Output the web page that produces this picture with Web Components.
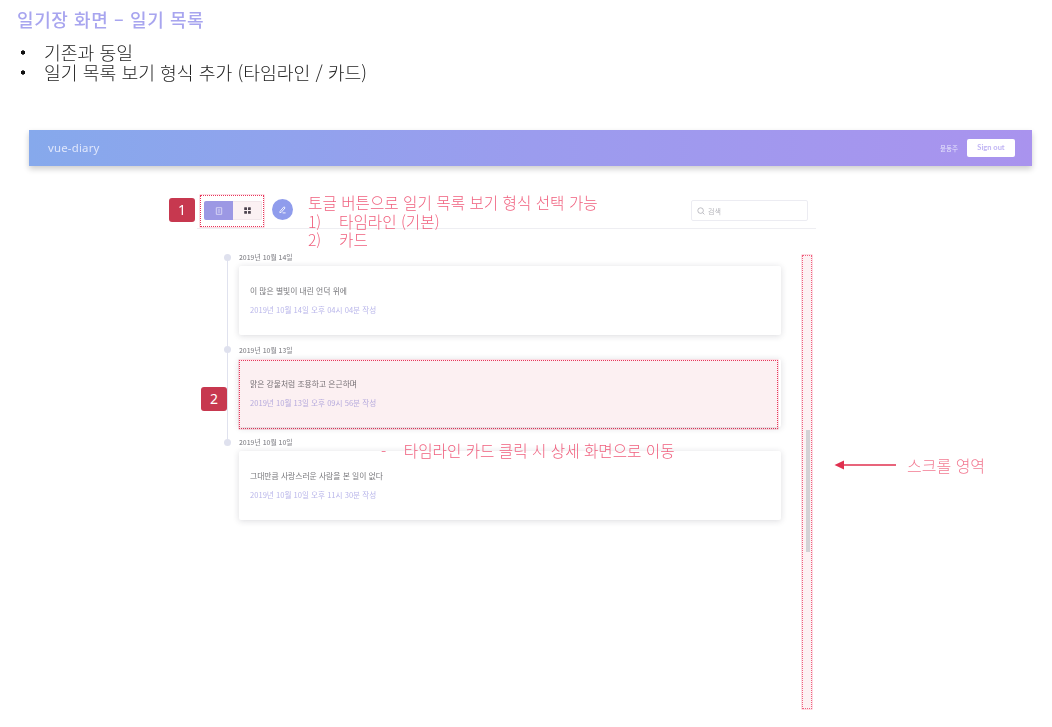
<!DOCTYPE html>
<html lang="ko">
<head>
<meta charset="utf-8">
<title>일기 목록</title>
<style>
html,body{margin:0;padding:0;background:#fff}
body{width:1052px;height:727px;overflow:hidden;font-family:"Noto Sans CJK KR","Noto Sans",sans-serif}
</style>
</head>
<body>
<slide-page>
  <slide-notes slot="notes" title-text="일기장 화면 – 일기 목록">
    <li>기존과 동일</li>
    <li>일기 목록 보기 형식 추가 (타임라인 / 카드)</li>
  </slide-notes>
  <diary-app slot="app">
    <timeline-entry date="2019년 10월 14일" text="이 많은 별빛이 내린 언덕 위에" meta="2019년 10월 14일 오후 04시 04분 작성"></timeline-entry>
    <timeline-entry date="2019년 10월 13일" text="맑은 강물처럼 조용하고 은근하며" meta="2019년 10월 13일 오후 09시 56분 작성"></timeline-entry>
    <timeline-entry last date="2019년 10월 10일" text="그대만큼 사랑스러운 사람을 본 일이 없다" meta="2019년 10월 10일 오후 11시 30분 작성"></timeline-entry>
  </diary-app>
  <slide-annotations slot="overlay"></slide-annotations>
</slide-page>

<script>
const FONT='"Noto Sans CJK KR","Noto Sans",sans-serif';
function define(name,html,init){
  customElements.define(name,class extends HTMLElement{
    constructor(){super();this.attachShadow({mode:'open'}).innerHTML=html}
    connectedCallback(){if(init)init(this)}
  });
}
define('slide-page',`<style>
:host{display:block;position:relative;width:1052px;height:727px;overflow:hidden}
.app{padding:0 20px 0 29px}
</style>
<slot name="notes"></slot><div class="app"><slot name="app"></slot></div><slot name="overlay"></slot>`);

define('slide-notes',`<style>
:host{display:block;height:130px;box-sizing:border-box;padding:7px 0 0 17px;font-family:${FONT}}
h1{margin:0 0 11px;font-size:18px;line-height:24px;font-weight:500;color:#a8a5ef;letter-spacing:.6px}
ul{margin:0;padding:0;font-size:18.25px;line-height:20px;font-weight:300;color:#222}
::slotted(li){list-style:none;margin:0;padding-left:27px;background:radial-gradient(circle at 6px 10.5px,#111 1.9px,transparent 2.4px)}
</style><h1></h1><ul><slot></slot></ul>`,el=>{
  el.shadowRoot.querySelector('h1').textContent=el.getAttribute('title-text');
});

define('diary-app',`<style>
:host{display:block;width:1003px;font-family:${FONT};filter:blur(.35px)}
header{height:36px;box-sizing:border-box;padding:0 17px 1px 19px;display:flex;align-items:center;justify-content:space-between;background:linear-gradient(90deg,#86a9ec 0%,#9b9cee 50%,#a993ee 100%);box-shadow:0 3px 6px rgba(0,0,0,.2)}
.brand{font:400 11.4px "Noto Sans",sans-serif;color:#dfe6fb;letter-spacing:.2px}
.user{display:flex;align-items:center;gap:9px}
.name{font-size:6.5px;color:#e6e4fb}
.out{width:48px;height:18px;box-sizing:border-box;border-radius:2px;background:#fff;color:#c0b4f4;font:700 7.5px/18px Lato,sans-serif;text-align:center}
.body{width:619px;margin-left:168px}
.bar{height:63px;box-sizing:border-box;border-bottom:1px solid #eeeef2;padding:35px 8px 0 7px;display:flex;align-items:flex-start}
.toggle{display:flex;width:58px;height:19px;border-radius:2px;overflow:hidden;box-sizing:border-box}
.toggle span{display:flex;align-items:center;justify-content:center}
.toggle .on{width:29px;background:#9c98e4}
.toggle .off{flex:1;background:#fbf1f3;border:1px solid #f1e6ea;border-left:0}
.pen{width:21px;height:21px;border-radius:50%;background:#8f9cec;margin:-2px 0 0 10px;display:flex;align-items:center;justify-content:center}
.search{margin:-1px 0 0 auto;width:117px;height:21px;box-sizing:border-box;border:1px solid #ececf2;border-radius:2px;display:flex;align-items:center;gap:3px;padding-left:5px;font-size:7px;color:#b4b4ba}
.list{padding:23px 0 0 24px}
</style>
<header><div class="brand">vue-diary</div><div class="user"><span class="name">윤동주</span><span class="out">Sign out</span></div></header>
<div class="body">
  <div class="bar">
    <div class="toggle">
      <span class="on"><svg width="8" height="8" viewBox="0 0 8 8" fill="none" stroke="#dcd9f6" stroke-width=".9"><path d="M1.3.7h5.4v6.6H1.3z"/><path d="M2.8 3h2.4M2.8 5h2.4"/></svg></span>
      <span class="off"><svg width="7" height="7" viewBox="0 0 7 7" fill="#4d444f"><rect x=".2" y=".2" width="2.8" height="2.8" rx=".5"/><rect x="4" y=".2" width="2.8" height="2.8" rx=".5"/><rect x=".2" y="4" width="2.8" height="2.8" rx=".5"/><rect x="4" y="4" width="2.8" height="2.8" rx=".5"/></svg></span>
    </div>
    <div class="pen"><svg width="9" height="9" viewBox="0 0 9 9" fill="none" stroke="#f1f2fd" stroke-width="1"><path d="M2 6.4 5.9 1.8l1.2 1L3.2 7.4 1.8 7.6z"/><path d="M4.6 7.9h3"/></svg></div>
    <div class="search"><svg width="8" height="8" viewBox="0 0 8 8" fill="none" stroke="#adadb5" stroke-width=".8"><circle cx="3.6" cy="3.6" r="2.8"/><path d="m5.7 5.7 1.7 1.7"/></svg><span>검색</span></div>
  </div>
  <div class="list"><slot></slot></div>
</div>`);

define('timeline-entry',`<style>
:host{display:block;position:relative;padding:0 0 0 18px;height:92.5px;font-family:${FONT}}
.date{font-size:6.8px;line-height:10px;height:14px;color:#8f8f94;font-weight:500}
.dot{position:absolute;left:2.5px;top:1.5px;width:7px;height:7px;border-radius:50%;background:#dfe1ee}
.rail{position:absolute;left:5.5px;top:5px;bottom:-5px;width:1px;background:#e0e2ee}
:host([last]) .rail{display:none}
.card{width:542px;height:68.5px;box-sizing:border-box;background:#fff;border-radius:2px;box-shadow:0 1px 6px rgba(40,40,60,.17);padding:19px 11px 0;font-size:7.8px}
.t{line-height:11px;color:#77777b;margin-bottom:8px}
.m{line-height:11px;color:#b9b6ea;font-size:7.6px}
</style><div class="rail"></div><div class="dot"></div><div class="date"></div><div class="card"><div class="t"></div><div class="m"></div></div>`,el=>{
  const r=el.shadowRoot;
  r.querySelector('.date').textContent=el.getAttribute('date');
  r.querySelector('.t').textContent=el.getAttribute('text');
  r.querySelector('.m').textContent=el.getAttribute('meta');
});

define('slide-annotations',`<style>
:host{position:absolute;inset:0;display:block;pointer-events:none;font-family:${FONT};font-weight:300;color:#f0607e;font-size:15.65px}
.a{position:absolute}
.box{border:1.5px dotted #e8355a;box-sizing:border-box;box-shadow:0 0 0 .5px rgba(240,100,130,.45)}
.badge{width:26px;height:24px;border-radius:3px;background:#c7384f;color:#fff;font:400 14px/24px "Noto Sans",sans-serif;text-align:center}
.note{left:308px;top:194px;line-height:18.5px;white-space:pre}
.note div{display:flex}.note b{font-weight:300;width:31px}
.click{left:381px;top:441px;line-height:20px;white-space:pre}
.scrolltext{left:907px;top:455px;line-height:20px;font-size:16px;color:#f27a92}
.thumb{left:806px;top:430px;width:4px;height:122px;background:#d4d2d6}
.highlight{left:239px;top:360px;width:539px;height:69px;background:#fcf0f2;mix-blend-mode:multiply}
.scrollbox{left:802px;top:255px;width:10px;height:454px;background:#fdf1f3;border-color:#f0607e}
</style>
<div class="a box" style="left:200px;top:195px;width:64px;height:32px"></div>
<div class="a badge" style="left:169px;top:198px">1</div>
<div class="a note"><div>토글 버튼으로 일기 목록 보기 형식 선택 가능</div><div><b>1)</b>타임라인 (기본)</div><div><b>2)</b>카드</div></div>
<div class="a box highlight"></div>
<div class="a badge" style="left:201px;top:387px">2</div>
<div class="a click">-    타임라인 카드 클릭 시 상세 화면으로 이동</div>
<div class="a box scrollbox"></div>
<div class="a thumb"></div>
<svg class="a" style="left:834px;top:459px" width="64" height="12" viewBox="0 0 64 12"><path d="M.5 6 10 1.5v9z" fill="#e0304f"/><path d="M9 6h53" stroke="#e0304f" stroke-width="1.5"/></svg>
<div class="a scrolltext">스크롤 영역</div>`);
</script>
</body>
</html>
